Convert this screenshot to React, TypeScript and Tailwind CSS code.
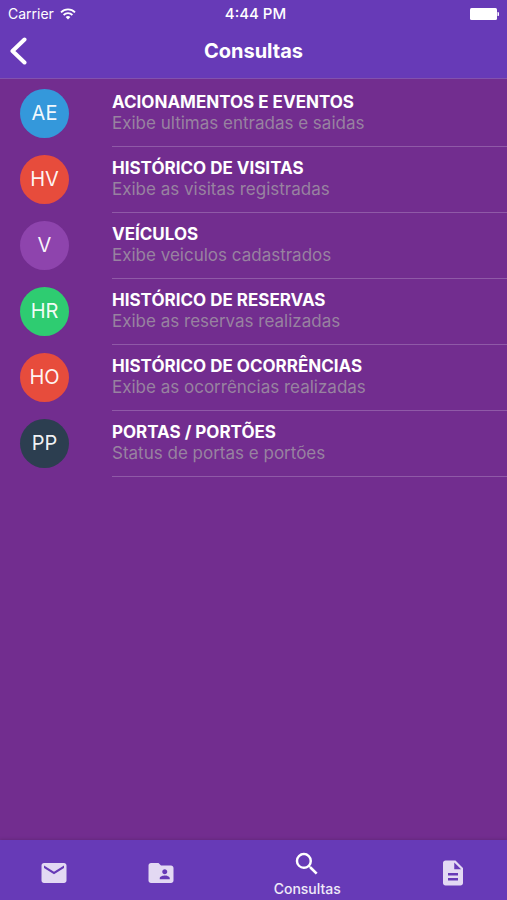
import { MdEmail, MdFolderShared, MdSearch, MdDescription } from "react-icons/md";

type Item = { initials: string; color: string; title: string; text: string };

const items: Item[] = [
  { initials: "AE", color: "bg-[#3498db]", title: "ACIONAMENTOS E EVENTOS", text: "Exibe ultimas entradas e saidas" },
  { initials: "HV", color: "bg-[#e74c3c]", title: "HISTÓRICO DE VISITAS", text: "Exibe as visitas registradas" },
  { initials: "V", color: "bg-[#8e44ad]", title: "VEÍCULOS", text: "Exibe veiculos cadastrados" },
  { initials: "HR", color: "bg-[#2ecc71]", title: "HISTÓRICO DE RESERVAS", text: "Exibe as reservas realizadas" },
  { initials: "HO", color: "bg-[#e74c3c]", title: "HISTÓRICO DE OCORRÊNCIAS", text: "Exibe as ocorrências realizadas" },
  { initials: "PP", color: "bg-[#2c3e50]", title: "PORTAS / PORTÕES", text: "Status de portas e portões" },
];

function StatusBar() {
  return (
    <div className="grid h-7 grid-cols-3 items-center px-2 text-sm">
      <div className="flex items-center gap-1.5">
        <span>Carrier</span>
        <svg className="h-3 w-4" viewBox="0 0 16 12" fill="none" stroke="currentColor" strokeWidth="1.8" aria-hidden="true">
          <path d="M1 4.3a10 10 0 0 1 14 0" />
          <path d="M3.6 7a6.3 6.3 0 0 1 8.8 0" />
          <path d="M8 11.5 5.6 9.1a3.4 3.4 0 0 1 4.8 0z" fill="currentColor" stroke="none" />
        </svg>
      </div>
      <span className="pl-1 text-center text-[15px] font-medium">4:44 PM</span>
      <svg className="h-3 w-8 justify-self-end" viewBox="0 0 32 12" fill="currentColor" aria-hidden="true">
        <rect x="3" y="0" width="27" height="12" rx="1.5" />
        <path d="M30.5 4a2 2 0 0 1 0 4z" />
      </svg>
    </div>
  );
}

function Row({ item }: { item: Item }) {
  return (
    <li>
      <a href="#" className="flex h-[66px] pl-5">
        <span className={`mt-2 flex size-[49px] shrink-0 items-center justify-center rounded-full pb-0.5 text-xl text-white/95 ${item.color}`}>
          {item.initials}
        </span>
        <span className="ml-[43px] flex flex-1 flex-col border-b border-[#8f59a7] pt-[11px]">
          <span className="text-[17px]/[21px] font-bold text-white">{item.title}</span>
          <span className="text-[17px]/[21px] text-[#9882a0]">{item.text}</span>
        </span>
      </a>
    </li>
  );
}

export default function App() {
  return (
    <div className="flex min-h-screen flex-col bg-[#722d8f] font-['Inter','Liberation_Sans',sans-serif] text-white">
      <header className="border-b border-[#8251ae] bg-[#673ab7]">
        <StatusBar />
        <div className="grid h-[50px] grid-cols-[40px_1fr_40px] items-center pb-1">
          <button type="button" aria-label="Voltar" className="flex h-10 items-center pl-2">
            <svg className="h-7 w-5" viewBox="0 0 20 28" fill="none" stroke="currentColor" strokeWidth="4" strokeLinecap="round" strokeLinejoin="round" aria-hidden="true">
              <path d="M16.5 2.5 4.5 14l12 11.5" />
            </svg>
          </button>
          <h1 className="text-center text-xl font-bold">Consultas</h1>
        </div>
      </header>

      <main className="flex-1 pt-0.5">
        <ul>
          {items.map((item) => (
            <Row key={item.title} item={item} />
          ))}
        </ul>
      </main>

      <nav className="grid h-15 grid-cols-[7fr_7fr_12fr_7fr] bg-[#673ab7] text-[#e3d9f3] shadow-[0_-1px_3px_rgba(0,0,0,0.12)]">
        <button type="button" aria-label="Mensagens" className="flex items-center justify-center pt-1.5">
          <MdEmail size={30} />
        </button>
        <button type="button" aria-label="Contatos" className="flex items-center justify-center pt-1.5">
          <MdFolderShared size={30} />
        </button>
        <button type="button" aria-current="page" className="flex flex-col items-center pt-[9px] text-white">
          <MdSearch size={30} />
          <span className="text-sm/5 font-medium text-white/90">Consultas</span>
        </button>
        <button type="button" aria-label="Documentos" className="flex items-center justify-center pt-1.5">
          <MdDescription size={30} />
        </button>
      </nav>
    </div>
  );
}
